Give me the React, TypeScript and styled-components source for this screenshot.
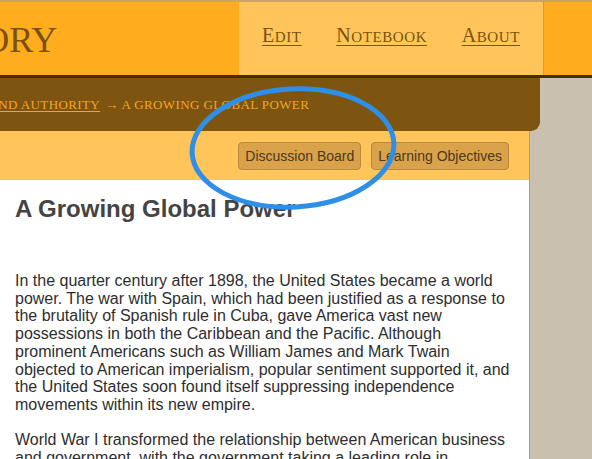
import React from "react";
import styled, { createGlobalStyle } from "styled-components";

const GlobalStyle = createGlobalStyle`
  html, body { margin: 0; padding: 0; background: #ffffff; }
  body { width: 592px; height: 459px; overflow: hidden; }
`;

const Page = styled.div`
  position: relative;
  width: 592px;
  height: 459px;
  overflow: hidden;
  display: flex;
  flex-direction: column;
  background: #c9c0b0;
`;

const Header = styled.header`
  display: flex;
  height: 73px;
  border-top: 2px solid #c9a466;
  border-bottom: 3px solid #4b2c00;
  background: #ffac1f;
  flex-shrink: 0;
`;

const Brand = styled.div`
  width: 239px;
  overflow: hidden;
  display: flex;
  align-items: center;
`;

const BrandText = styled.span<{ $shift: number }>`
  margin-left: ${(p) => p.$shift}px;
  padding-top: 2px;
  white-space: nowrap;
  font-family: "Liberation Serif", serif;
  font-size: 36px;
  color: #7a5210;
  letter-spacing: 0px;
`;

const Nav = styled.nav`
  width: 305px;
  background: #ffc45a;
  border-right: 1px solid #e39a24;
  display: flex;
  align-items: center;
  justify-content: space-between;
  padding: 0 23px 6px;
  box-sizing: border-box;
`;

const NavLink = styled.a`
  display: inline-block;
  font-family: "Liberation Serif", serif;
  font-size: 15px;
  text-transform: uppercase;
  letter-spacing: 0.6px;
  color: #7a5210;
  text-decoration: underline;
  text-underline-offset: 3px;
  text-decoration-thickness: 1px;
  &::first-letter {
    font-size: 20px;
  }
`;

const Crumbs = styled.div`
  width: 540px;
  height: 53px;
  background: #7d5511;
  border-bottom-right-radius: 9px;
  display: flex;
  align-items: center;
  overflow: hidden;
  white-space: nowrap;
  font-family: "Liberation Serif", serif;
  font-size: 13px;
  text-transform: uppercase;
  letter-spacing: 0.4px;
  color: #f3a42a;
  flex-shrink: 0;
`;

const CrumbLink = styled.a<{ $shift: number }>`
  margin-left: ${(p) => p.$shift}px;
  color: #f3a42a;
  text-decoration: underline;
  text-underline-offset: 2px;
`;

const CrumbCurrent = styled.span`
  margin-left: 5px;
`;

const Main = styled.main`
  width: 529px;
  flex: 1;
  display: flex;
  flex-direction: column;
  background: #ffffff;
  box-shadow: 1px 0 0 #a99f90;
`;

const Toolbar = styled.div`
  height: 49px;
  background: #ffc45a;
  display: flex;
  justify-content: flex-end;
  align-items: center;
  gap: 10px;
  padding: 1px 20px 0;
  box-sizing: border-box;
`;

const ToolButton = styled.button`
  height: 28px;
  padding: 0 6px;
  border: 1px solid #b98a3e;
  border-radius: 4px;
  background: #d9a24b;
  color: #4a3a1e;
  font-family: "Liberation Sans", Arial, sans-serif;
  font-size: 14px;
  cursor: pointer;
`;

const Content = styled.article`
  padding: 14px 15px 0;
  font-family: "Liberation Sans", Arial, sans-serif;
`;

const Heading = styled.h1`
  margin: 0 0 48px;
  font-size: 24px;
  line-height: 30px;
  font-weight: bold;
  color: #444444;
`;

const Para = styled.p`
  margin: 0 0 17.7px;
  font-size: 16px;
  line-height: 17.7px;
  color: #2e2e2e;
`;

const Annotation = styled.svg`
  position: absolute;
  left: 180px;
  top: 80px;
  overflow: visible;
  pointer-events: none;
`;

export default function App() {
  return (
    <>
      <GlobalStyle />
      <Page>
        <Header>
          <Brand>
            <BrandText $shift={-96}>HISTORY</BrandText>
          </Brand>
          <Nav>
            <NavLink href="#">Edit</NavLink>
            <NavLink href="#">Notebook</NavLink>
            <NavLink href="#">About</NavLink>
          </Nav>
        </Header>
        <Crumbs>
          <CrumbLink href="#" $shift={-62}>Power and Authority</CrumbLink>
          <CrumbCurrent>→ A Growing Global Power</CrumbCurrent>
        </Crumbs>
        <Main>
          <Toolbar>
            <ToolButton>Discussion Board</ToolButton>
            <ToolButton>Learning Objectives</ToolButton>
          </Toolbar>
          <Content>
            <Heading>A Growing Global Power</Heading>
            <Para>
              In the quarter century after 1898, the United States became a world power. The war
              with Spain, which had been justified as a response to the brutality of Spanish rule in
              Cuba, gave America vast new possessions in both the Caribbean and the Pacific.
              Although prominent Americans such as William James and Mark Twain objected to
              American imperialism, popular sentiment supported it, and the United States soon found
              itself suppressing independence movements within its new empire.
            </Para>
            <Para>
              World War I transformed the relationship between American business and government,
              with the government taking a leading role in coordinating the economy.
            </Para>
          </Content>
        </Main>
        <Annotation width="220" height="140" viewBox="180 80 220 140">
          <ellipse
            cx="293"
            cy="148"
            rx="101"
            ry="59"
            fill="none"
            stroke="#2e8fe8"
            strokeWidth="5"
            transform="rotate(-3 293 148)"
          />
        </Annotation>
      </Page>
    </>
  );
}
